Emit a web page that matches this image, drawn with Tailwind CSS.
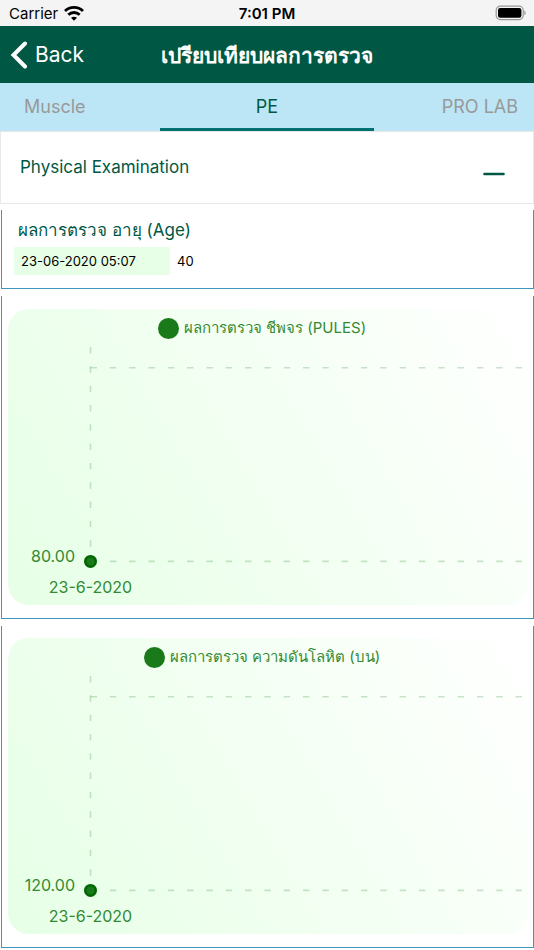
<!DOCTYPE html>
<html lang="th">
<head>
    <meta charset="UTF-8">
    <meta name="viewport" content="width=device-width, initial-scale=1.0">
    <title>เปรียบเทียบผลการตรวจ</title>
    <script src="https://cdn.jsdelivr.net/npm/@tailwindcss/browser@4"></script>
</head>
<body class="bg-white font-[Inter,'Noto_Sans',sans-serif] text-[#005844]">

    <!-- Status bar -->
    <div class="grid grid-cols-3 items-center h-[26px] px-2 bg-[#f4f4f4] text-black text-[15px] leading-5">
        <div class="flex items-center gap-1.5 pt-0.5 pl-px">
            <span>Carrier</span>
            <svg class="w-5 h-4" viewBox="0 0 20 16" fill="none" stroke="currentColor" stroke-width="2.8">
                <path d="M1 5.1C6 .2 14 .2 19 5.1"/>
                <path d="M4.3 8.8c3.3-3.1 8.1-3.1 11.4 0"/>
                <path d="M10 14.8l-3-3c1.7-1.5 4.3-1.5 6 0z" fill="currentColor" stroke="none"/>
            </svg>
        </div>
        <div class="text-center font-semibold pt-0.5">7:01 PM</div>
        <svg class="justify-self-end w-8 h-4" viewBox="0 0 32 16">
            <rect x="2.2" y="1.2" width="27" height="13.4" rx="4" fill="none" stroke="#999" stroke-width="1.2"/>
            <rect x="4" y="3" width="23.4" height="9.8" rx="2.2"/>
            <path d="M30.3 5.6c1.8.8 1.8 3.8 0 4.6z" fill="#999"/>
        </svg>
    </div>

    <!-- Header -->
    <header class="grid grid-cols-[1fr_auto_1fr] items-center h-[57px] px-2.5 bg-[#005844] text-white">
        <button class="flex items-center gap-[7px] justify-self-start text-[21px] leading-7">
            <svg class="w-[18px] h-7" viewBox="0 0 18 28" fill="none" stroke="currentColor" stroke-width="4" stroke-linecap="round">
                <path d="M15 2.5L3.5 14 15 25.5"/>
            </svg>
            Back
        </button>
        <h1 class="text-[21px] leading-7 pt-0.5 font-semibold">เปรียบเทียบผลการตรวจ</h1>
    </header>

    <!-- Tabs -->
    <nav class="grid grid-cols-[3fr_4fr_3fr] h-12 bg-[#bce6f6] text-lg text-[#999]">
        <button class="pl-6 text-left">Muscle</button>
        <button class="border-b-3 border-[#007070] pt-[3px] text-[#005844]">PE</button>
        <button class="pr-4 text-right">PRO LAB</button>
    </nav>

    <!-- Accordion -->
    <button class="flex w-full items-center justify-between h-[73px] border border-[#e8e8e8] pl-[19px] pr-7 text-[17px]">
        <span>Physical Examination</span>
        <svg class="w-[22px] h-4 mt-3" viewBox="0 0 22 16" stroke="currentColor" stroke-width="2.6" stroke-linecap="round">
            <path d="M1.5 8h19"/>
        </svg>
    </button>

    <main class="flex flex-col gap-[7px] pt-1.5 pl-px">
        <section class="h-[79px] border border-t-0 border-[#3d97bd] px-3 pt-1.5">
            <h2 class="pl-1 text-[17px] leading-7">ผลการตรวจ อายุ (Age)</h2>
            <div class="flex items-center gap-[7px] mt-[3px] text-[13px] leading-7 text-black">
                <span class="w-[156px] bg-[#e6ffe6] pl-[7px]">23-06-2020 05:07</span>
                <span>40</span>
            </div>
        </section>

        <!-- Pulse -->
        <section class="border border-t-0 border-[#3d97bd] pl-1.5 pr-[5px] pt-[13px] pb-[13px]">
            <div class="rounded-[21px] bg-linear-60 from-[#e6ffe6] to-white text-[#338a33]">
                <h3 class="flex items-center justify-center gap-[5px] h-[38px] pr-3 text-[15px]">
                    <span class="size-[21px] rounded-full bg-[#1a7a1a]"></span>
                    ผลการตรวจ ชีพจร (PULES)
                </h3>
                <svg class="block w-full h-[258px]" font-size="16" fill="currentColor">
                    <g stroke="#007000" stroke-opacity=".2" stroke-width="1.6" stroke-dasharray="6.44 12.88">
                        <line x1="82.5" y1="0" x2="82.5" y2="214"/>
                        <line x1="82.5" y1="20.8" x2="99%" y2="20.8"/>
                        <line x1="82.5" y1="214.4" x2="99%" y2="214.4"/>
                    </g>
                    <circle cx="82.5" cy="214.4" r="5.2" fill="#1a7a1a" stroke="#006600" stroke-width="2.6"/>
                    <text x="67" y="215" text-anchor="end">80.00</text>
                    <text x="82.5" y="246" text-anchor="middle">23-6-2020</text>
                </svg>
            </div>
        </section>

        <!-- Blood pressure (upper) -->
        <section class="border border-t-0 border-[#3d97bd] pl-1.5 pr-[5px] pt-3 pb-[13px]">
            <div class="rounded-[21px] bg-linear-60 from-[#e6ffe6] to-white text-[#338a33]">
                <h3 class="flex items-center justify-center gap-[5px] h-[38px] pr-3 text-[15px]">
                    <span class="size-[21px] rounded-full bg-[#1a7a1a]"></span>
                    ผลการตรวจ ความดันโลหิต (บน)
                </h3>
                <svg class="block w-full h-[258px]" font-size="16" fill="currentColor">
                    <g stroke="#007000" stroke-opacity=".2" stroke-width="1.6" stroke-dasharray="6.44 12.88">
                        <line x1="82.5" y1="0" x2="82.5" y2="214"/>
                        <line x1="82.5" y1="20.8" x2="99%" y2="20.8"/>
                        <line x1="82.5" y1="214.4" x2="99%" y2="214.4"/>
                    </g>
                    <circle cx="82.5" cy="214.4" r="5.2" fill="#1a7a1a" stroke="#006600" stroke-width="2.6"/>
                    <text x="67" y="215" text-anchor="end">120.00</text>
                    <text x="82.5" y="246" text-anchor="middle">23-6-2020</text>
                </svg>
            </div>
        </section>
    </main>
</body>
</html>
